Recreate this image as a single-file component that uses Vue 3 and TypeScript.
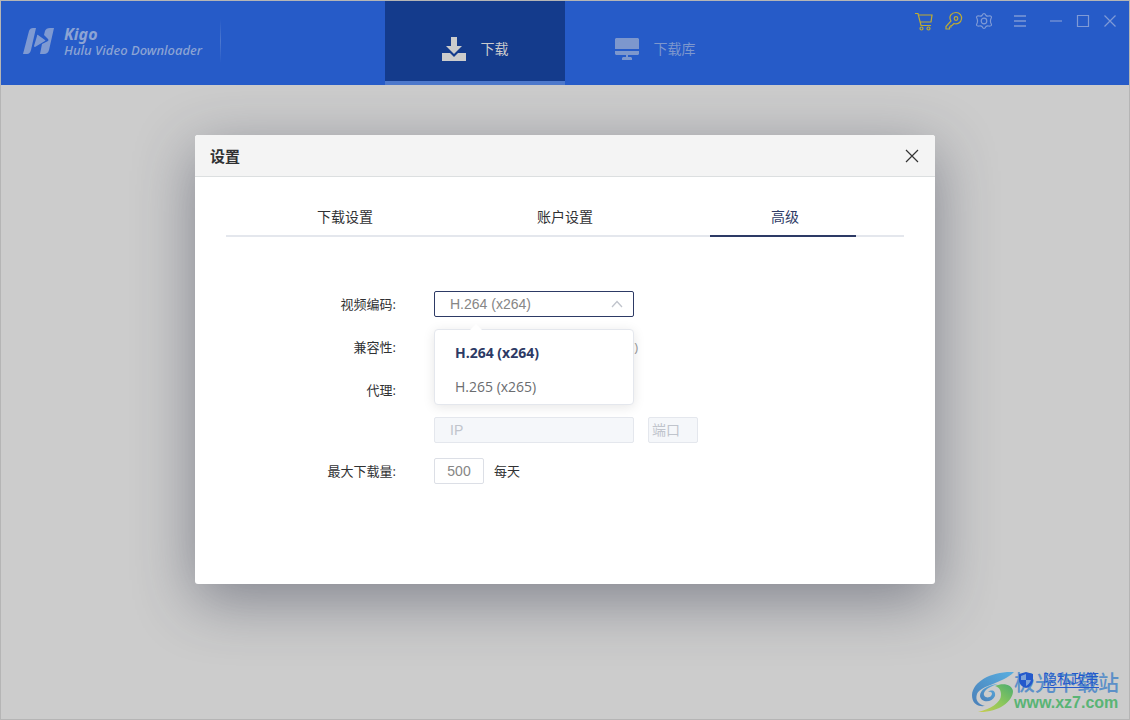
<script setup lang="ts">
import { ref } from 'vue'

interface Option {
  value: string
  label: string
}

const tabs: string[] = ['下载设置', '账户设置', '高级']
const activeTab = ref<number>(2)
const codecs: Option[] = [
  { value: 'x264', label: 'H.264 (x264)' },
  { value: 'x265', label: 'H.265 (x265)' },
]
const codec = ref<string>('x264')
const host = ref<string>('')
const port = ref<string>('')
const maxDownloads = ref<string>('500')
</script>

<template>
  <div class="window">
    <header class="topbar">
      <div class="brand">
        <svg class="logo" width="32" height="26" viewBox="0 0 32 26" aria-hidden="true">
          <path d="M6 3Q7 0 10 0H13L8 22Q7 26 4 26H0Z" />
          <path d="M31 0H27Q23 0 22 3L21 7 25 11Q26 12 25 13L19 16 17 26H21Q25 26 26 22Z" />
          <path d="M15 7Q14 6 14 8L11 18Q11 19 12 19L22 13Q23 12 22 12Z" />
        </svg>
        <div class="brand-text">
          <strong>Kigo</strong>
          <span>Hulu Video Downloader</span>
        </div>
        <i class="divider"></i>
      </div>

      <nav class="nav">
        <button type="button" class="nav-item active">
          <svg width="24" height="24" viewBox="0 0 24 24" aria-hidden="true">
            <path d="M9 0H15V9H20L12 17 4 9H9Z" />
            <path d="M0 16H8L12 20 16 16H24V24H0Z" />
          </svg>
          <span>下载</span>
        </button>
        <button type="button" class="nav-item">
          <svg width="24" height="24" viewBox="0 0 24 24" aria-hidden="true">
            <path d="M1 1H23L24 2V12H0V2Z" />
            <path d="M0 14H24V17L23 18H13V20H16L17 21V23H7V21L8 20H11V18H1L0 17Z" />
          </svg>
          <span>下载库</span>
        </button>
      </nav>

      <div class="tools">
        <button type="button" class="tool gold" aria-label="Cart">
          <svg width="20" height="20" viewBox="0 0 20 20">
            <path d="M1 2.500H4L7 14.500H17M4.500 4H18L17 11H6.500" />
            <circle cx="7.500" cy="17.500" r="1.500" /><circle cx="14.500" cy="17.500" r="1.500" />
          </svg>
        </button>
        <button type="button" class="tool gold" aria-label="Key">
          <svg width="20" height="20" viewBox="0 0 20 20">
            <path d="M7 10C4 5 8 1.500 12 1.500C16 1.500 18 5 17.500 8C17 12 13 13.500 10 12.500L8 14.500H7V16H5.500V18H2V15.500Z" />
            <circle cx="12" cy="7.500" r="1.800" />
          </svg>
        </button>
        <button type="button" class="tool" aria-label="Settings">
          <svg width="20" height="20" viewBox="0 0 20 20">
            <path d="M8 4.500Q10 .500 12 4.500Q13 5.500 14.500 5Q19 4.500 16.800 8Q16 10 16.800 12Q19 15.500 14.500 15Q13 14.500 12 15.500Q10 19.500 8 15.500Q7 14.500 5.500 15Q1 15.500 3.200 12Q4 10 3.200 8Q1 4.500 5.500 5Q7 5.500 8 4.500Z" />
            <circle cx="10" cy="10" r="2.800" />
          </svg>
        </button>
        <button type="button" class="tool menu" aria-label="Menu">
          <svg width="20" height="20" viewBox="0 0 20 20"><path d="M4 5H16M4 10H16M4 15H16" /></svg>
        </button>
        <button type="button" class="tool win" aria-label="Minimize">
          <svg width="20" height="20" viewBox="0 0 20 20"><path d="M4 10H16" /></svg>
        </button>
        <button type="button" class="tool win" aria-label="Maximize">
          <svg width="20" height="20" viewBox="0 0 20 20"><path d="M4.500 4.500H15.500V15.500H4.500Z" /></svg>
        </button>
        <button type="button" class="tool win" aria-label="Close window">
          <svg width="20" height="20" viewBox="0 0 20 20"><path d="M4.500 4.500 15.500 15.500M15.500 4.500 4.500 15.500" /></svg>
        </button>
      </div>
    </header>

    <section class="dialog" role="dialog" aria-labelledby="dialog-title">
      <div class="dialog-head">
        <h1 id="dialog-title">设置</h1>
        <button type="button" class="close" aria-label="Close">
          <svg width="14" height="14" viewBox="0 0 14 14"><path d="M1 1 13 13M13 1 1 13" /></svg>
        </button>
      </div>

      <div class="tabs" role="tablist">
        <button
          v-for="(tab, i) in tabs"
          :key="tab"
          type="button"
          role="tab"
          class="tab"
          :class="{ selected: i === activeTab }"
          :aria-selected="i === activeTab"
          @click="activeTab = i"
        >{{ tab }}</button>
      </div>

      <form class="form" @submit.prevent>
        <label class="label" for="codec">视频编码:</label>
        <div class="field select-field">
          <select id="codec" v-model="codec" class="box wide">
            <option v-for="o in codecs" :key="o.value" :value="o.value">{{ o.label }}</option>
          </select>
          <svg class="chevron" width="12" height="8" viewBox="0 0 12 8" aria-hidden="true"><path d="M1 7 6 1.500 11 7" /></svg>
          <div class="popup">
            <ul role="listbox">
              <li
                v-for="o in codecs"
                :key="o.value"
                role="option"
                :aria-selected="o.value === codec"
                :class="{ chosen: o.value === codec }"
                @click="codec = o.value"
              >{{ o.label }}</li>
            </ul>
          </div>
        </div>

        <span class="label">兼容性:</span>
        <div class="field"><span class="hint">)</span></div>

        <label class="label" for="host">代理:</label>
        <div class="field"></div>

        <span></span>
        <div class="field proxy">
          <input id="host" v-model="host" class="box wide" type="text" placeholder="IP" disabled />
          <input v-model="port" class="box port" type="text" placeholder="端口" aria-label="端口" disabled />
        </div>

        <label class="label" for="max">最大下载量:</label>
        <div class="field limit">
          <input id="max" v-model="maxDownloads" class="box count" type="text" />
          <span>每天</span>
        </div>
      </form>
    </section>

    <footer class="corner">
      <div class="watermark">
        <svg width="44" height="42" viewBox="0 0 44 42" aria-hidden="true">
          <defs>
            <linearGradient id="sky" x1="0" y1="1" x2="1" y2="0">
              <stop offset="0" stop-color="#4a7fb8" /><stop offset="1" stop-color="#58aee0" />
            </linearGradient>
            <linearGradient id="leaf" x1="0" y1="1" x2="1" y2="0">
              <stop offset="0" stop-color="#c9cc50" /><stop offset="0.500" stop-color="#8cc75c" /><stop offset="1" stop-color="#4cac70" />
            </linearGradient>
          </defs>
          <path fill="url(#sky)" d="M42 1C20 0 1 10 0 24C0 32 5 36 13 35C6 33 3 29 5 23C9 14 30 13 42 1Z" />
          <path fill="url(#sky)" d="M26 13C15 14 8 19 8 25C9 32 20 32 23 25C24 20 20 18 16 21C20 20 21 23 19 25C16 28 11 26 12 22C14 17 20 15 26 13Z" />
          <path fill="url(#leaf)" d="M6 41C18 38 29 32 29 24C29 19 27 16 23 15C32 11 40 14 41 20C41 31 25 42 6 41Z" />
        </svg>
        <div class="watermark-text">
          <span class="site">极光下载站</span>
          <span class="url">www.xz7.com</span>
        </div>
      </div>
      <a class="privacy" href="#">
        <svg width="16" height="16" viewBox="0 0 16 16" aria-hidden="true">
          <path d="M8 0 15 2V8C15 12 12 15 8 16C4 15 1 12 1 8V2Z" />
          <path class="light" d="M8 2V8H13C12 11 10 13 8 14V8H3V4Z" />
        </svg>
        <span>隐私政策</span>
      </a>
    </footer>
  </div>
</template>

<style>
body {
  margin: 0;
}
</style>

<style scoped>
* {
  box-sizing: border-box;
}

.window {
  position: relative;
  min-height: 100vh;
  border: 1px solid #b5b5b5;
  background: #cccccc;
  font-family: "Open Sans", "Noto Sans CJK SC", sans-serif;
  font-size: 14px;
  color: #303133;
  overflow: hidden;
}

button {
  border: 0;
  padding: 0;
  background: none;
  font: inherit;
  color: inherit;
}

.topbar {
  display: grid;
  grid-template-columns: 1fr 360px 1fr;
  height: 84px;
  background: #265bc8;
}

.brand {
  display: flex;
  align-items: center;
  padding: 0 0 4px 22px;
  color: #8ca4d4;
}

.logo {
  fill: #7f9ad2;
  margin-right: 9px;
}

.brand-text {
  display: flex;
  flex-direction: column;
  padding-top: 2px;
  font-family: "Noto Sans", sans-serif;
  font-style: italic;
  font-weight: 500;
  font-size: 13px;
  line-height: 16px;
  white-space: nowrap;
}

.brand-text strong {
  font-size: 16px;
  font-weight: 700;
}

.divider {
  width: 1px;
  height: 44px;
  margin-left: 18px;
  background: linear-gradient(transparent, #4d78cf, transparent);
}

.nav {
  display: grid;
  grid-template-columns: 1fr 1fr;
}

.nav-item {
  display: flex;
  align-items: center;
  justify-content: center;
  gap: 15px;
  padding-top: 11px;
  color: #7d97cd;
}

.nav-item svg {
  fill: currentColor;
}

.nav-item span {
  line-height: 20px;
}

.nav-item.active {
  background: #143b8c;
  border-bottom: 4px solid #4d78cb;
  padding-top: 15px;
  color: #cccccc;
}

.tools {
  display: flex;
  justify-content: flex-end;
  align-items: flex-start;
  gap: 10px;
  padding: 10px 9px 0 0;
}

.tool {
  width: 20px;
  height: 20px;
}

.tool svg {
  display: block;
  fill: none;
  stroke: #7f9ad6;
  stroke-width: 1.2;
}

.tool.gold svg {
  stroke: #c0ac31;
}

.tool.menu {
  margin: 0 6px;
}

.tool.menu svg {
  stroke: #6789d2;
  stroke-width: 2;
}

.tool.win + .tool.win {
  margin-left: -3px;
}

.dialog {
  width: 740px;
  max-width: 100%;
  margin: 50px auto 0;
  padding-bottom: 100px;
  border-radius: 3px;
  background: #ffffff;
  box-shadow: 0 16px 60px rgba(40, 44, 66, 0.45);
}

.dialog-head {
  display: flex;
  align-items: center;
  justify-content: space-between;
  height: 42px;
  padding: 0 16px 0 15px;
  border-bottom: 1px solid #dcdfe0;
  border-radius: 3px 3px 0 0;
  background: #f4f4f4;
}

.dialog-head h1 {
  margin: 0;
  font-size: 15px;
  font-weight: 600;
}

.close svg {
  display: block;
  fill: none;
  stroke: #333333;
  stroke-width: 1.2;
}

.tabs {
  display: grid;
  grid-template-columns: repeat(3, 1fr);
  margin: 20px 31px 0;
  padding: 0 9px;
  border-bottom: 2px solid #e4e7ed;
}

.tab {
  position: relative;
  height: 38px;
  padding-top: 2px;
  line-height: 36px;
}

.tab.selected {
  color: #2d3a65;
}

.tab.selected::after {
  content: "";
  position: absolute;
  left: 35px;
  bottom: -2px;
  width: 146px;
  height: 2px;
  background: #2d3a65;
}

.form {
  display: grid;
  grid-template-columns: 201px 1fr;
  grid-template-rows: 26px 30px 25px 26px 26px;
  align-items: center;
  column-gap: 38px;
  row-gap: 15px;
  margin-top: 54px;
  font-size: 13px;
  line-height: 26px;
}

.label {
  text-align: right;
}

.field {
  display: flex;
}

.select-field {
  position: relative;
  width: 200px;
}

.box {
  height: 26px;
  margin: 0;
  padding: 0 15px;
  border: 1px solid #dcdfe6;
  border-radius: 2px;
  background: #ffffff;
  font-family: "Liberation Sans", "Noto Sans CJK SC", sans-serif;
  font-size: 14px;
  color: #868686;
  outline: 0;
}

.wide {
  width: 200px;
}

select.box {
  appearance: none;
  border-color: #2d3a65;
}

.box:disabled {
  background: #f5f7fa;
  border-color: #e4e7ed;
}

.box::placeholder {
  color: #c0c4cc;
}

.chevron {
  position: absolute;
  right: 11px;
  top: 9px;
  fill: none;
  stroke: #c0c4cc;
  stroke-width: 1.3;
}

.popup {
  position: absolute;
  z-index: 2;
  left: 0;
  top: 38px;
  width: 200px;
  border: 1px solid #e4e7ed;
  border-radius: 4px;
  background: #ffffff;
  box-shadow: 0 2px 12px rgba(0, 0, 0, 0.1);
}

.popup::before {
  content: "";
  position: absolute;
  left: 35px;
  top: -6px;
  border: 6px solid transparent;
  border-top: 0;
  border-bottom-color: #ffffff;
}

.popup ul {
  margin: 0;
  padding: 6px 0 0;
  list-style: none;
}

.popup li {
  height: 34px;
  padding: 0 20px;
  font-size: 14px;
  line-height: 34px;
  color: #6b6d70;
}

.popup li.chosen {
  font-weight: 700;
  color: #2d3a65;
}

.hint {
  width: 204px;
  text-align: right;
  color: #999999;
}

.proxy {
  gap: 14px;
}

.port {
  width: 50px;
  padding: 0 3px;
}

.limit {
  gap: 10px;
}

.count {
  width: 50px;
  padding: 0;
  text-align: center;
}

.corner {
  position: absolute;
  right: 10px;
  bottom: 6px;
}

.watermark {
  display: flex;
  align-items: center;
}

.watermark-text {
  display: flex;
  flex-direction: column;
  margin-left: -2px;
}

.site {
  font-size: 21px;
  line-height: 22px;
  font-weight: 500;
  color: #5c90c8;
}

.url {
  font-family: "Liberation Sans", sans-serif;
  font-size: 16px;
  line-height: 20px;
  font-weight: 700;
  color: #59b475;
}

.privacy {
  position: absolute;
  right: 20px;
  top: 0;
  display: flex;
  align-items: center;
  gap: 9px;
  line-height: 16px;
  color: #2459cc;
  text-decoration: none;
}

.privacy span {
  border-bottom: 1px solid #2459cc;
}

.privacy svg {
  fill: #2459cc;
}

.privacy .light {
  fill: #7da2d8;
}
</style>
